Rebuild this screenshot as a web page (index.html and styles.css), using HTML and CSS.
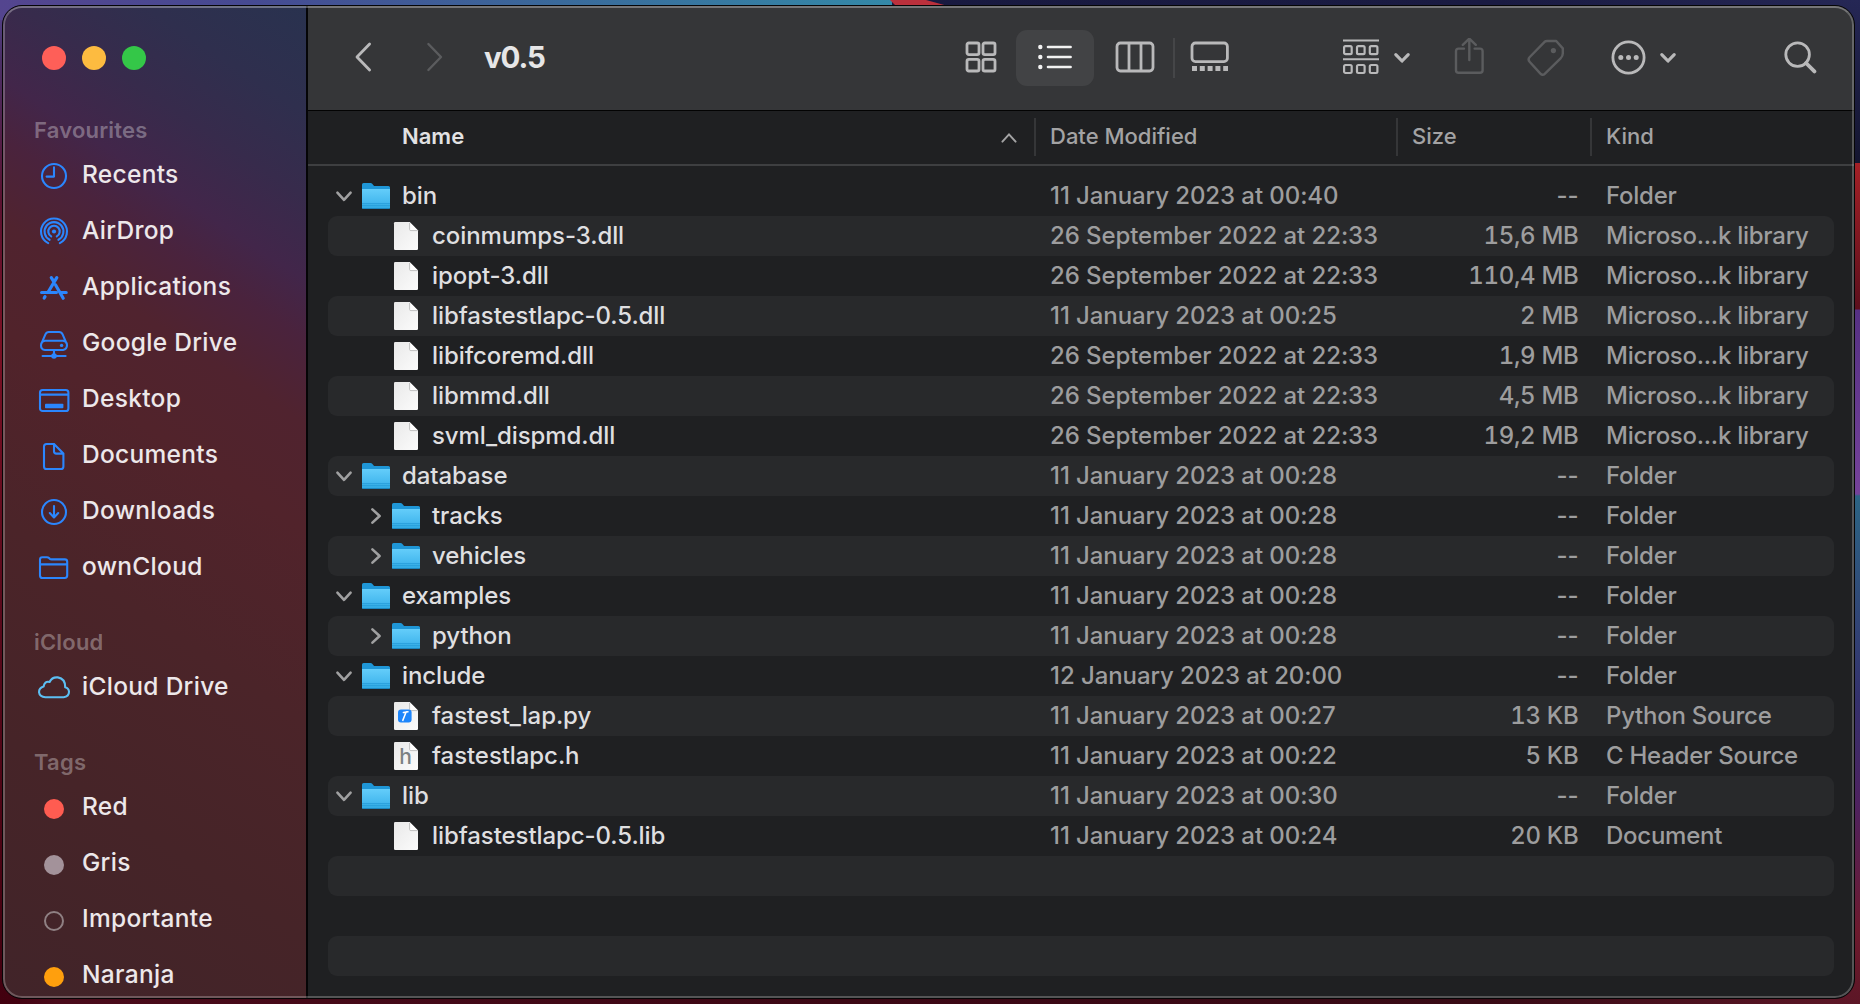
FILE: index.html
```
<!DOCTYPE html>
<html lang="en">
<head>
<meta charset="utf-8">
<title>v0.5</title>
<link rel="stylesheet" href="styles.css">
</head>
<body>
<svg class="defs" width="0" height="0">
  <defs>
    <linearGradient id="gFront" x1="0" y1="0" x2="0" y2="1">
      <stop offset="0" stop-color="#64cdfa"/><stop offset="0.65" stop-color="#46b9ef"/><stop offset="1" stop-color="#2ea7e2"/>
    </linearGradient>
    <linearGradient id="gPage" x1="0" y1="0" x2="1" y2="1">
      <stop offset="0" stop-color="#e9e9e9"/><stop offset="1" stop-color="#fbfbfb"/>
    </linearGradient>
    <symbol id="folder" viewBox="0 0 28 28">
      <path d="M0 2.6Q0 1 1.6 1H8.6Q9.6 1 10.2 1.8L11.6 3.4Q12.2 4 13 4H26.4Q28 4 28 5.6V20H0Z" fill="#1f96d6"/>
      <path d="M0 7H28V25.4Q28 27 26.4 27H1.6Q0 27 0 25.4Z" fill="url(#gFront)"/>
      <path d="M0 21.6H28M0 23.6H28" stroke="#249ad8" stroke-width="0.8"/>
      <path d="M0.6 26.5H27.4" stroke="#1c84bd"/>
    </symbol>
    <symbol id="file" viewBox="0 0 28 28">
      <path d="M2 1.2Q2 0 3.2 0H17.6L26 8.6V26.8Q26 28 24.8 28H3.2Q2 28 2 26.8Z" fill="url(#gPage)"/>
      <path d="M17.6 0V7.4Q17.6 8.6 18.8 8.6H26Z" fill="#fff"/>
      <path d="M17.6 1V7.4Q17.6 8.6 18.8 8.6H25.6" fill="none" stroke="#b9b9b9" stroke-width="0.9"/>
    </symbol>
    <symbol id="open" viewBox="0 0 20 20"><path d="M3.4 6.6L10 13.8L16.6 6.6" fill="none" stroke="#a0a0a1" stroke-width="2.6" stroke-linecap="round" stroke-linejoin="round"/></symbol>
    <symbol id="closed" viewBox="0 0 20 20"><path d="M6.4 3.4L13.6 10L6.4 16.6" fill="none" stroke="#a0a0a1" stroke-width="2.6" stroke-linecap="round" stroke-linejoin="round"/></symbol>
    <symbol id="down" viewBox="0 0 20 40"><path d="M3.8 16.6L10 23L16.2 16.6" fill="none" stroke="#b9b9ba" stroke-width="3.2" stroke-linecap="round" stroke-linejoin="round"/></symbol>
  </defs>
</svg>
<div class="wall-left"></div>
<div class="wall-top"></div>
<div class="wall-wedge"></div>
<div class="wall-right"></div>

<div class="window">
  <nav class="sidebar">
    <div class="lights"><i class="close"></i><i class="mini"></i><i class="full"></i></div>

    <h2>Favourites</h2>
    <a class="place"><svg viewBox="0 0 36 36"><circle cx="18" cy="18" r="12"/><path d="M18 9.4V18.6H10.6"/></svg><span>Recents</span></a>
    <a class="place"><svg viewBox="0 0 36 36"><circle cx="18" cy="17.5" r="2.1" class="fill"/><path d="M12.2 29.1A13 13 0 1 1 23.8 29.1M13.6 25.8A9.4 9.4 0 1 1 22.4 25.8M15.2 22.4A5.7 5.7 0 1 1 20.8 22.4"/></svg><span>AirDrop</span></a>
    <a class="place"><svg viewBox="0 0 36 36"><g stroke-width="3.2"><path d="M20.8 7.6L12.2 22M15.3 7.6L17.6 11.4M19.6 15L27.2 28.2M5.6 22.5H20.4M25 22.5H30.2M9 26.6L8.2 28"/></g></svg><span>Applications</span></a>
    <a class="place"><svg viewBox="0 0 36 36"><path d="M5.4 17.6L9.4 8.4Q10.4 6 12.8 6H23.2Q25.6 6 26.6 8.4L30.6 17.6M9 14.8H27Q31 15.4 31 19.2T27 24H9Q5 23.4 5 19.4T9 14.8M18 24V29M6.6 30H29.6"/><circle cx="25.6" cy="19.4" r="1.7" class="fill"/><circle cx="18" cy="30" r="2.8" class="fill"/></svg><span>Google Drive</span></a>
    <a class="place"><svg viewBox="0 0 36 36"><rect x="4" y="8" width="28.4" height="21" rx="2.6"/><path d="M4 12.6H32"/><rect x="9" y="21.8" width="18.4" height="4.4" rx="0.8" class="fill"/></svg><span>Desktop</span></a>
    <a class="place"><svg viewBox="0 0 36 36"><path d="M18 6H10.6Q8 6 8 8.6V28.4Q8 31 10.6 31H24.8Q27.4 31 27.4 28.4V15.6L18 6V13.2Q18 15.6 20.4 15.6H27.4"/></svg><span>Documents</span></a>
    <a class="place"><svg viewBox="0 0 36 36"><circle cx="18" cy="18" r="12"/><path d="M18 12V23.2M13.8 19L18 23.4L22.2 19"/></svg><span>Downloads</span></a>
    <a class="place"><svg viewBox="0 0 36 36"><path d="M4 25.6V9.6Q4 7.2 6.4 7.2H11Q12.2 7.2 13 8L13.8 8.8Q14.6 9.4 15.6 9.4H28.8Q31.2 9.4 31.2 11.8V25.6Q31.2 28 28.8 28H6.4Q4 28 4 25.6M4 14.4H31.2"/></svg><span>ownCloud</span></a>

    <h2>iCloud</h2>
    <a class="place cloud"><svg viewBox="0 0 36 36"><path d="M9.4 27.2H27.6Q33 26.6 33 21.8Q32.8 18.2 29.2 17.2Q29.4 8.8 21.8 7.4Q16 6.8 13.6 12Q8.4 10.8 7.6 16.6Q3 18 3 22.2Q3.6 27 9.4 27.2Z"/></svg><span>iCloud Drive</span></a>

    <h2>Tags</h2>
    <a class="place"><i class="tag red"></i><span>Red</span></a>
    <a class="place"><i class="tag grey"></i><span>Gris</span></a>
    <a class="place"><i class="tag ring"></i><span>Importante</span></a>
    <a class="place"><i class="tag orange"></i><span>Naranja</span></a>
  </nav>

  <main class="main">
    <header class="toolbar">
      <svg class="nav" viewBox="0 0 20 40" width="20" height="40"><path d="M16.6 6L4 19L16.6 32"/></svg>
      <svg class="nav off" viewBox="0 0 20 40" width="20" height="40"><path d="M3.4 6L16 19L3.4 32"/></svg>
      <h1>v0.5</h1>
      <svg class="grid" viewBox="0 0 34 40" width="34" height="40"><rect x="3" y="5" width="12" height="11.6" rx="1.8"/><rect x="19" y="5" width="12" height="11.6" rx="1.8"/><rect x="3" y="21.4" width="12" height="11.6" rx="1.8"/><rect x="19" y="21.4" width="12" height="11.6" rx="1.8"/></svg>
      <span class="selected"><svg viewBox="0 0 34 40" width="34" height="40"><path d="M10 9H32.6M10 19H32.6M10 29H32.6" stroke-width="2.6" stroke-linecap="round"/><circle cx="2.3" cy="9" r="2.2"/><circle cx="2.3" cy="19" r="2.2"/><circle cx="2.3" cy="29" r="2.2"/></svg></span>
      <svg class="columns" viewBox="0 0 40 40" width="40" height="40"><rect x="2" y="5" width="36" height="28" rx="3.4"/><path d="M14 5V33M26 5V33"/></svg>
      <i class="sep"></i>
      <svg class="gallery" viewBox="0 0 40 40" width="40" height="40"><rect x="2" y="5" width="35.4" height="18.6" rx="3.4"/><path d="M2 30.4H38" stroke-width="5" stroke-dasharray="5 2.8"/></svg>
      <svg class="group" viewBox="0 0 38 40" width="38" height="40"><path d="M1 2.6H37M1 21.3H37" stroke-width="2"/><g stroke-width="2.2"><rect x="2.1" y="8.1" width="7.6" height="8" rx="1.4"/><rect x="15" y="8.1" width="7.6" height="8" rx="1.4"/><rect x="27.8" y="8.1" width="7.6" height="8" rx="1.4"/><rect x="2.1" y="27" width="7.6" height="8" rx="1.4"/><rect x="15" y="27" width="7.6" height="8" rx="1.4"/><rect x="27.8" y="27" width="7.6" height="8" rx="1.4"/></g></svg>
      <svg class="down" width="20" height="40"><use href="#down"/></svg>
      <svg class="share off" viewBox="0 0 32 40" width="32" height="40"><path d="M11 10.6H5.6Q3 10.6 3 13.2V32.2Q3 34.8 5.6 34.8H27Q29.6 34.8 29.6 32.2V13.2Q29.6 10.6 27 10.6H21.6M16.3 22V1.4M9.8 6.8L16.3 0.6L22.8 6.8"/></svg>
      <svg class="label off" viewBox="0 0 40 40" width="40" height="40"><path d="M18.6 3.8L3.8 19Q1.4 21.4 3.8 24L14.4 35.6Q16.6 38 19 35.6L34.6 20.4Q36.8 18.2 36.8 15.6V10.4L30.2 3H21Q19.6 3 18.6 3.8Z"/><circle cx="27.4" cy="12.6" r="2.6" class="fill"/></svg>
      <svg class="more" viewBox="0 0 40 40" width="40" height="40"><circle cx="20.5" cy="19.5" r="15.6"/><g class="fill"><circle cx="12.8" cy="19.5" r="2.5"/><circle cx="20.5" cy="19.5" r="2.5"/><circle cx="28.2" cy="19.5" r="2.5"/></g></svg>
      <svg class="down second" width="20" height="40"><use href="#down"/></svg>
      <svg class="search" viewBox="0 0 34 40" width="34" height="40"><circle cx="14.6" cy="16.6" r="11.8"/><path d="M23 25L31.4 33.4" stroke-width="3.8" stroke-linecap="round"/></svg>
    </header>

    <div class="head">
      <div class="sorted"><b>Name</b><svg viewBox="0 0 20 20" width="20" height="20"><path d="M3.4 13.6L10 6.4L16.6 13.6"/></svg></div>
      <div>Date Modified</div>
      <div>Size</div>
      <div>Kind</div>
    </div>

    <div class="rows">
      <div class="row"><div class="name"><svg class="tw"><use href="#open"/></svg><svg class="ic"><use href="#folder"/></svg>bin</div><div>11 January 2023 at 00:40</div><div class="none">--</div><div>Folder</div></div>
      <div class="row"><div class="name in"><i class="tw"></i><svg class="ic"><use href="#file"/></svg>coinmumps-3.dll</div><div>26 September 2022 at 22:33</div><div class="size">15,6 MB</div><div>Microso...k library</div></div>
      <div class="row"><div class="name in"><i class="tw"></i><svg class="ic"><use href="#file"/></svg>ipopt-3.dll</div><div>26 September 2022 at 22:33</div><div class="size">110,4 MB</div><div>Microso...k library</div></div>
      <div class="row"><div class="name in"><i class="tw"></i><svg class="ic"><use href="#file"/></svg>libfastestlapc-0.5.dll</div><div>11 January 2023 at 00:25</div><div class="size">2 MB</div><div>Microso...k library</div></div>
      <div class="row"><div class="name in"><i class="tw"></i><svg class="ic"><use href="#file"/></svg>libifcoremd.dll</div><div>26 September 2022 at 22:33</div><div class="size">1,9 MB</div><div>Microso...k library</div></div>
      <div class="row"><div class="name in"><i class="tw"></i><svg class="ic"><use href="#file"/></svg>libmmd.dll</div><div>26 September 2022 at 22:33</div><div class="size">4,5 MB</div><div>Microso...k library</div></div>
      <div class="row"><div class="name in"><i class="tw"></i><svg class="ic"><use href="#file"/></svg>svml_dispmd.dll</div><div>26 September 2022 at 22:33</div><div class="size">19,2 MB</div><div>Microso...k library</div></div>
      <div class="row"><div class="name"><svg class="tw"><use href="#open"/></svg><svg class="ic"><use href="#folder"/></svg>database</div><div>11 January 2023 at 00:28</div><div class="none">--</div><div>Folder</div></div>
      <div class="row"><div class="name in"><svg class="tw"><use href="#closed"/></svg><svg class="ic"><use href="#folder"/></svg>tracks</div><div>11 January 2023 at 00:28</div><div class="none">--</div><div>Folder</div></div>
      <div class="row"><div class="name in"><svg class="tw"><use href="#closed"/></svg><svg class="ic"><use href="#folder"/></svg>vehicles</div><div>11 January 2023 at 00:28</div><div class="none">--</div><div>Folder</div></div>
      <div class="row"><div class="name"><svg class="tw"><use href="#open"/></svg><svg class="ic"><use href="#folder"/></svg>examples</div><div>11 January 2023 at 00:28</div><div class="none">--</div><div>Folder</div></div>
      <div class="row"><div class="name in"><svg class="tw"><use href="#closed"/></svg><svg class="ic"><use href="#folder"/></svg>python</div><div>11 January 2023 at 00:28</div><div class="none">--</div><div>Folder</div></div>
      <div class="row"><div class="name"><svg class="tw"><use href="#open"/></svg><svg class="ic"><use href="#folder"/></svg>include</div><div>12 January 2023 at 20:00</div><div class="none">--</div><div>Folder</div></div>
      <div class="row"><div class="name in"><i class="tw"></i><svg class="ic"><use href="#file"/><rect x="6" y="7.4" width="13.6" height="13.2" rx="3" fill="#1e86fb"/><path d="M14.2 9.8L10.8 18.4M11.4 10.6L16 9.8" stroke="#fff" stroke-width="1.5" stroke-linecap="round"/></svg>fastest_lap.py</div><div>11 January 2023 at 00:27</div><div class="size">13 KB</div><div>Python Source</div></div>
      <div class="row"><div class="name in"><i class="tw"></i><svg class="ic"><use href="#file"/><text x="13.6" y="22" text-anchor="middle" class="glyph">h</text></svg>fastestlapc.h</div><div>11 January 2023 at 00:22</div><div class="size">5 KB</div><div>C Header Source</div></div>
      <div class="row"><div class="name"><svg class="tw"><use href="#open"/></svg><svg class="ic"><use href="#folder"/></svg>lib</div><div>11 January 2023 at 00:30</div><div class="none">--</div><div>Folder</div></div>
      <div class="row"><div class="name in"><i class="tw"></i><svg class="ic"><use href="#file"/></svg>libfastestlapc-0.5.lib</div><div>11 January 2023 at 00:24</div><div class="size">20 KB</div><div>Document</div></div>
      <div class="row"></div>
      <div class="row"></div>
      <div class="row"></div>
    </div>
  </main>
</div>
</body>
</html>
```
FILE: styles.css
```
* { box-sizing: border-box; }

body {
  margin: 0;
  width: 1860px;
  height: 1004px;
  overflow: hidden;
  padding: 5px 5px 5px 2px;
  background: linear-gradient(90deg, #42000f 0, #4a0a1a 3%, #3c0714 45%, #380a15 80%, #5c1626 100%);
  font-family: Inter, "Liberation Sans", sans-serif;
  font-size: 24px;
  color: #dededf;
}

.defs { position: absolute; }

/* Wallpaper showing around the window */
.wall-left {
  position: absolute;
  left: 0;
  top: 0;
  width: 20px;
  height: 1004px;
  background: linear-gradient(180deg, #54458f 0, #4a2f66 60px, #5a1230 200px, #7a1024 340px, #5a0a1c 600px, #42000f 1004px);
}
.wall-top {
  position: absolute;
  left: 0;
  top: 0;
  width: 1860px;
  height: 20px;
  background:
    linear-gradient(90deg, #54458f 0, #464a92 250px, #3a6a9b 560px, #3489a8 892px, transparent 892px),
    linear-gradient(90deg, #191a40 892px, #1a1b42 1500px, #252755 1860px);
}
.wall-wedge {
  position: absolute;
  left: 890px;
  top: 0;
  width: 58px;
  height: 6px;
  background: #bb303c;
  clip-path: polygon(0 0, 36px 0, 58px 100%, 6px 100%);
}
.wall-right {
  position: absolute;
  right: 0;
  top: 0;
  width: 30px;
  height: 1004px;
  background: linear-gradient(180deg, #252755 0, #14152f 163px, #a32026 163px, #5c0f1c 309px, #553083 310px, #75429a 494px, #2c6484 496px, #34316c 700px, #4d2260 800px, #6d1a2e 930px, #5c1626 1004px);
}

.window {
  position: relative;
  display: flex;
  width: 1853px;
  height: 994px;
  border: 1px solid #050506;
  border-radius: 20px;
  overflow: hidden;
  background: #1f2022;
}
.window::after {
  content: "";
  position: absolute;
  inset: 0;
  border: 2px solid rgba(255, 255, 255, 0.24);
  border-top-color: rgba(255, 255, 255, 0.32);
  border-radius: 19px;
  pointer-events: none;
}

/* Sidebar */
.sidebar {
  width: 305px;
  flex: none;
  border-right: 2px solid #050506;
  background: linear-gradient(213.7deg, #29324f 0, #2f2f4e 9%, #372b4c 16%, #42264a 23%, #4a233d 28%, #50232f 35%, #51232b 44%, #4b2429 60%, #462428 78%, #412429 100%);
}
.lights { display: flex; gap: 16px; padding: 40px 0 0 39px; height: 78px; }
.lights i { width: 24px; height: 24px; border-radius: 50%; }
.close { background: #fe5f58; }
.mini { background: #fdbb40; }
.full { background: #34c748; }

.sidebar h2 {
  margin: 0;
  height: 64px;
  padding: 34px 0 0 31px;
  font-size: 22px;
  font-weight: 600;
  line-height: 24px;
  letter-spacing: 0.2px;
  color: rgba(255, 255, 255, 0.32);
}
.place { display: flex; align-items: center; height: 56px; padding-left: 33px; }
.place svg {
  width: 36px;
  height: 36px;
  margin-right: 10px;
  fill: none;
  stroke: #2b86fd;
  stroke-width: 2.1;
  stroke-linecap: round;
  stroke-linejoin: round;
}
.place .fill { fill: #2b86fd; stroke: none; }
.cloud svg { stroke: #5cbef2; }
.place span {
  padding-bottom: 4px;
  font-size: 24.5px;
  font-weight: 470;
  letter-spacing: 0.3px;
  color: #ede8ea;
}
.tag { width: 20px; height: 20px; margin: 1px 18px 0 8px; border-radius: 50%; }
.red { background: #ff5c51; }
.grey { background: #a3929a; }
.ring { border: 2px solid #8f8083; }
.orange { background: #ff9f0d; }

/* Toolbar */
.main { flex: 1; }
.toolbar {
  display: flex;
  align-items: center;
  height: 105px;
  padding-left: 45px;
  border-bottom: 1px solid #030303;
  background: #353638;
}
.toolbar svg { flex: none; fill: none; stroke: #b9b9ba; stroke-width: 2.8; stroke-linejoin: round; }
.toolbar .fill { fill: #b9b9ba; stroke: none; }
.toolbar .nav { stroke: #b9b9ba; stroke-linecap: round; }
.toolbar .nav.off { margin-left: 52px; }
.toolbar .off { stroke: #5b5c5e; stroke-width: 2.4; stroke-linecap: round; }
.toolbar .off .fill { fill: #5b5c5e; }
.toolbar h1 {
  margin: 0 0 2px 39px;
  width: 480px;
  font-size: 29.5px;
  font-weight: 700;
  letter-spacing: -1.1px;
  color: #e6e6e7;
}
.selected {
  display: flex;
  align-items: center;
  width: 78px;
  height: 56px;
  margin-left: 18px;
  padding-left: 22px;
  border-radius: 11px;
  background: #424345;
}
.toolbar .selected svg { stroke: #f2f2f2; }
.toolbar .selected circle { fill: #f2f2f2; stroke: none; }
.columns { margin-left: 21px; }
.sep { width: 2px; height: 40px; margin-left: 18px; background: #454648; }
.gallery { margin-left: 15px; }
.group { margin-left: 112px; }
.down { margin-left: 12px; }
.share { margin-left: 41px; }
.label { margin-left: 41px; }
.more { margin-left: 42px; }
.second { margin-left: 10px; }
.search { margin-left: 105px; }

/* List */
.head, .row { display: grid; grid-template-columns: 722px 347px 181.5px 1fr; align-items: center; }
.head {
  grid-template-columns: 726px 362px 194px 1fr;
  height: 55px;
  padding-bottom: 1px;
  border-bottom: 2px solid #3e3f41;
  font-size: 22px;
  font-weight: 500;
  color: #a3a3a4;
}
.head > div { height: 38px; line-height: 36px; padding-left: 14px; border-left: 2px solid #353638; }
.head .sorted { display: flex; align-items: center; justify-content: space-between; padding: 0 15px 2px 94px; border: 0; }
.sorted b { font-weight: 600; color: #e2e2e3; }
.sorted svg { fill: none; stroke: #a3a3a4; stroke-width: 2; stroke-linecap: round; margin-top: 4px; }

.rows { padding: 10px 20px 0 20px; }
.row {
  height: 40px;
  line-height: 40px;
  border-radius: 9px;
  font-weight: 450;
  letter-spacing: -0.08px;
  color: #9d9d9e;
}
.row:nth-child(even) { background: #28292b; }
.row > div:last-child { padding-left: 27.5px; letter-spacing: -0.25px; }
.name { display: flex; align-items: center; padding-left: 6px; color: #dfdfe0; }
.name.in { padding-left: 38px; }
.tw { width: 20px; height: 20px; margin-right: 8px; }
.in .tw { margin-right: 6px; }
.ic { width: 28px; height: 28px; margin-right: 12px; }
.size, .none { text-align: right; }
.size { font-variant-numeric: tabular-nums; letter-spacing: -0.3px; }
.glyph { font-size: 21px; font-weight: 500; fill: #7c8183; }
```
